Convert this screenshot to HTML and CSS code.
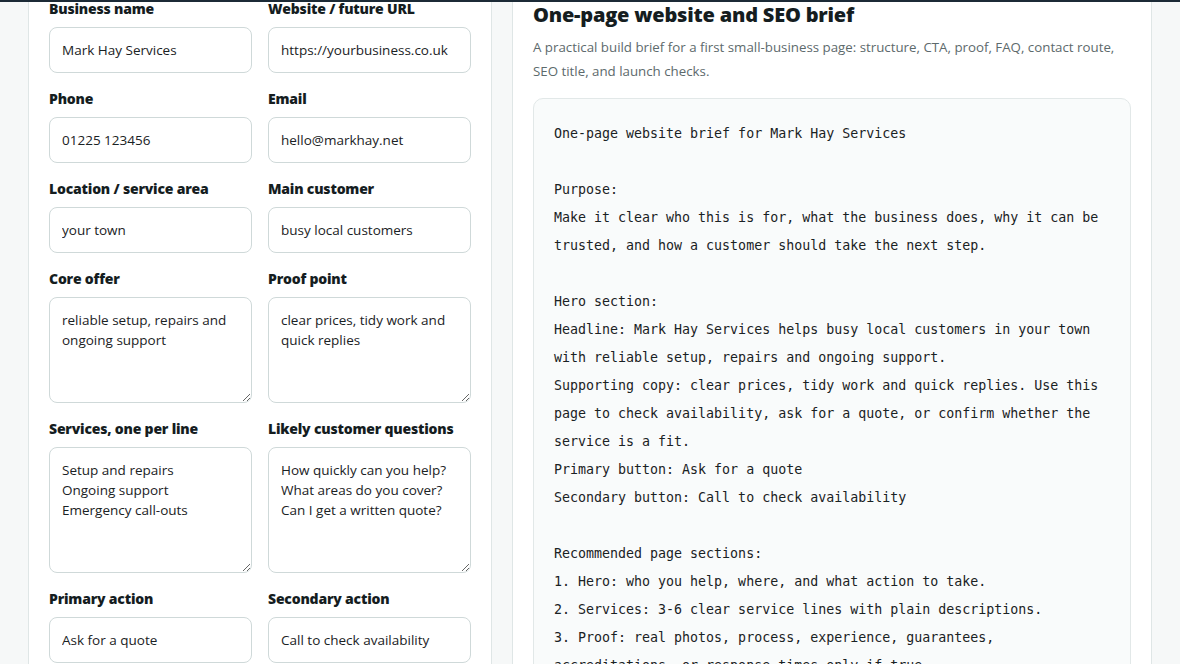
FILE: index.html
```html
<!DOCTYPE html>
<html lang="en">
  <head>
    <meta charset="UTF-8" />
    <meta name="viewport" content="width=device-width, initial-scale=1.0" />
    <title>One-page website and SEO brief</title>
    <link rel="stylesheet" href="styles.css">
  </head>
  <body>
    <div class="topbar"></div>

    <main class="layout">
      <!-- Inputs for the brief -->
      <section class="card form-card">
        <div class="field-grid">
          <div class="field">
            <label for="biz-name">Business name</label>
            <input type="text" id="biz-name" value="Mark Hay Services" />
          </div>
          <div class="field">
            <label for="website">Website / future URL</label>
            <input type="text" id="website" value="https://yourbusiness.co.uk" />
          </div>
          <div class="field">
            <label for="phone">Phone</label>
            <input type="text" id="phone" value="01225 123456" />
          </div>
          <div class="field">
            <label for="email">Email</label>
            <input type="text" id="email" value="hello@markhay.net" />
          </div>
          <div class="field">
            <label for="area">Location / service area</label>
            <input type="text" id="area" value="your town" />
          </div>
          <div class="field">
            <label for="customer">Main customer</label>
            <input type="text" id="customer" value="busy local customers" />
          </div>
          <div class="field">
            <label for="offer">Core offer</label>
            <textarea id="offer" class="short">reliable setup, repairs and ongoing support</textarea>
          </div>
          <div class="field">
            <label for="proof">Proof point</label>
            <textarea id="proof" class="short">clear prices, tidy work and quick replies</textarea>
          </div>
          <div class="field">
            <label for="services">Services, one per line</label>
            <textarea id="services" class="tall">Setup and repairs
Ongoing support
Emergency call-outs</textarea>
          </div>
          <div class="field">
            <label for="questions">Likely customer questions</label>
            <textarea id="questions" class="tall">How quickly can you help?
What areas do you cover?
Can I get a written quote?</textarea>
          </div>
          <div class="field">
            <label for="primary">Primary action</label>
            <input type="text" id="primary" value="Ask for a quote" />
          </div>
          <div class="field">
            <label for="secondary">Secondary action</label>
            <input type="text" id="secondary" value="Call to check availability" />
          </div>
        </div>
      </section>

      <!-- Generated brief -->
      <section class="card output-card">
        <h2>One-page website and SEO brief</h2>
        <p class="lead">A practical build brief for a first small-business page: structure, CTA, proof, FAQ, contact route, SEO title, and launch checks.</p>
        <pre class="brief">One-page website brief for Mark Hay Services

Purpose:
Make it clear who this is for, what the business does, why it can be
trusted, and how a customer should take the next step.

Hero section:
Headline: Mark Hay Services helps busy local customers in your town
with reliable setup, repairs and ongoing support.
Supporting copy: clear prices, tidy work and quick replies. Use this
page to check availability, ask for a quote, or confirm whether the
service is a fit.
Primary button: Ask for a quote
Secondary button: Call to check availability

Recommended page sections:
1. Hero: who you help, where, and what action to take.
2. Services: 3-6 clear service lines with plain descriptions.
3. Proof: real photos, process, experience, guarantees,
accreditations, or response times only if true.
4. FAQ: answer the questions customers ask before they get in touch.
5. Contact: phone, email, service area and a simple enquiry form.</pre>
      </section>
    </main>
  </body>
</html>
```

FILE: styles.css
```css
* {
  box-sizing: border-box;
}

body {
  margin: 0;
  font-family: "Open Sans", "Noto Sans", sans-serif;
  background-color: #f6f8f8;
  color: #151d1f;
  overflow: hidden;
}

/* bottom edge of the sticky header, drawn over the cards */
.topbar {
  position: relative;
  z-index: 2;
  height: 2px;
  background-color: #1c2a36;
}

.layout {
  display: grid;
  grid-template-columns: 464px 1fr;
  gap: 20px;
  max-width: 1124px;
  margin: -22px auto 0;
}

.card {
  background: #fff;
  border: 1px solid #dfe6e6;
  border-radius: 12px;
}

.form-card {
  padding: 19px 20px 24px;
}

.field-grid {
  display: grid;
  grid-template-columns: 1fr 1fr;
  column-gap: 16px;
  row-gap: 17px;
}

.field label {
  display: block;
  font-size: 14px;
  font-weight: 800;
  line-height: 18px;
  margin-bottom: 9px;
  letter-spacing: -0.2px;
}

.field input,
.field textarea {
  display: block;
  width: 100%;
  font-family: "Open Sans", "Noto Sans", sans-serif;
  font-size: 13.5px;
  color: #1a2224;
  border: 1px solid #cfd9d9;
  border-radius: 8px;
  background: #fff;
  padding: 0 12px;
}

.field input {
  height: 46px;
}

.field textarea {
  line-height: 20px;
  padding-top: 12px;
  resize: vertical;
}

.field textarea.short {
  height: 106px;
}

.field textarea.tall {
  height: 126px;
}

.output-card {
  padding: 21px 20px 24px;
}

.output-card h2 {
  margin: 0;
  font-size: 20px;
  font-weight: 800;
  line-height: 26px;
  letter-spacing: -0.2px;
}

.lead {
  margin: 7px 0 15px;
  font-size: 13.3px;
  line-height: 24px;
  color: #5d6a6c;
}

.brief {
  margin: 0;
  padding: 21px 20px 20px;
  background: #f9fbfb;
  border: 1px solid #e2e8e8;
  border-radius: 10px;
  font-family: "DejaVu Sans Mono", "Liberation Mono", monospace;
  font-size: 13.3px;
  line-height: 28px;
  color: #1a2224;
  white-space: pre-wrap;
}
```
